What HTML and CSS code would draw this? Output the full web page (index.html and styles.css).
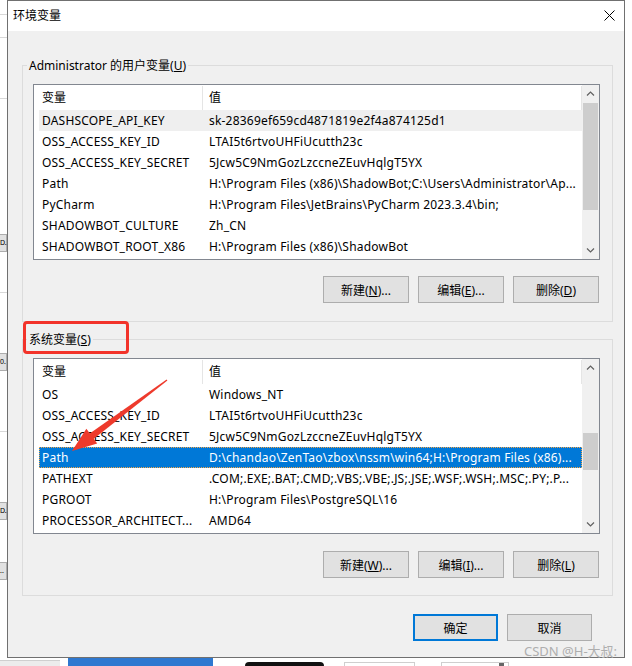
FILE: index.html
```html
<!DOCTYPE html>
<html lang="zh-CN">
<head>
<meta charset="utf-8">
<title>环境变量</title>
<link rel="stylesheet" href="styles.css">
</head>
<body>
<div class="desk">
  <div class="desk-main">
    <div class="desk-left">
      <div class="dl-line l1"></div>
      <div class="dl-line l2"></div>
      <div class="dl-line l3"></div>
      <div class="dl-btn b1">D.</div>
      <div class="dl-line l4"></div>
      <div class="dl-btn b2">0.</div>
      <div class="dl-line l5"></div>
      <div class="dl-btn b3">D.</div>
      <div class="dl-btn b4">..</div>
    </div>
    <div class="desk-right"></div>
  </div>
  <div class="taskbar">
    <div class="tb-gray"></div>
    <div class="tb-blue"></div>
    <div class="tb-black"></div>
    <div class="tb-box"></div>
    <div class="tb-box tb-box2"><span class="tb-dot"></span></div>
  </div>
</div>

<div class="dialog">
  <div class="titlebar">
    <span class="title">环境变量</span>
    <svg class="close" width="11" height="11" viewBox="0 0 11 11"><path d="M0.5 0.5L10.5 10.5M10.5 0.5L0.5 10.5" stroke="#000" stroke-width="1" fill="none"/></svg>
  </div>
  <div class="dlg-body">
    <fieldset class="group">
      <legend>Administrator 的用户变量(<u>U</u>)</legend>
      <div class="gbody">
        <div class="listview">
          <div class="lv-main">
            <div class="lv-head"><div class="c1">变量</div><div class="c2">值</div></div>
            <div class="row hot"><div class="c1">DASHSCOPE_API_KEY</div><div class="c2">sk-28369ef659cd4871819e2f4a874125d1</div></div>
            <div class="row"><div class="c1">OSS_ACCESS_KEY_ID</div><div class="c2">LTAI5t6rtvoUHFiUcutth23c</div></div>
            <div class="row"><div class="c1">OSS_ACCESS_KEY_SECRET</div><div class="c2">5Jcw5C9NmGozLzccneZEuvHqlgT5YX</div></div>
            <div class="row"><div class="c1">Path</div><div class="c2">H:\Program Files (x86)\ShadowBot;C:\Users\Administrator\Ap...</div></div>
            <div class="row"><div class="c1">PyCharm</div><div class="c2">H:\Program Files\JetBrains\PyCharm 2023.3.4\bin;</div></div>
            <div class="row"><div class="c1">SHADOWBOT_CULTURE</div><div class="c2">Zh_CN</div></div>
            <div class="row"><div class="c1">SHADOWBOT_ROOT_X86</div><div class="c2">H:\Program Files (x86)\ShadowBot</div></div>
          </div>
          <div class="scroll">
            <div class="sb-btn"><svg width="9" height="5" viewBox="0 0 9 5"><path d="M1 4.5L4.5 1L8 4.5" stroke="#606060" stroke-width="1.2" fill="none"/></svg></div>
            <div class="sb-track"><div class="thumb thumb-user"></div></div>
            <div class="sb-btn"><svg width="9" height="5" viewBox="0 0 9 5"><path d="M1 0.5L4.5 4L8 0.5" stroke="#606060" stroke-width="1.2" fill="none"/></svg></div>
          </div>
        </div>
        <div class="btnrow">
          <button class="btn">新建(<u>N</u>)...</button>
          <button class="btn">编辑(<u>E</u>)...</button>
          <button class="btn">删除(<u>D</u>)</button>
        </div>
      </div>
    </fieldset>

    <fieldset class="group g2">
      <legend>系统变量(<u>S</u>)</legend>
      <div class="gbody">
        <div class="listview">
          <div class="lv-main">
            <div class="lv-head"><div class="c1">变量</div><div class="c2">值</div></div>
            <div class="row"><div class="c1">OS</div><div class="c2">Windows_NT</div></div>
            <div class="row"><div class="c1">OSS_ACCESS_KEY_ID</div><div class="c2">LTAI5t6rtvoUHFiUcutth23c</div></div>
            <div class="row"><div class="c1">OSS_ACCESS_KEY_SECRET</div><div class="c2">5Jcw5C9NmGozLzccneZEuvHqlgT5YX</div></div>
            <div class="row sel"><div class="c1">Path</div><div class="c2">D:\chandao\ZenTao\zbox\nssm\win64;H:\Program Files (x86)...</div></div>
            <div class="row"><div class="c1">PATHEXT</div><div class="c2">.COM;.EXE;.BAT;.CMD;.VBS;.VBE;.JS;.JSE;.WSF;.WSH;.MSC;.PY;.P...</div></div>
            <div class="row"><div class="c1">PGROOT</div><div class="c2">H:\Program Files\PostgreSQL\16</div></div>
            <div class="row"><div class="c1">PROCESSOR_ARCHITECT...</div><div class="c2">AMD64</div></div>
          </div>
          <div class="scroll">
            <div class="sb-btn"><svg width="9" height="5" viewBox="0 0 9 5"><path d="M1 4.5L4.5 1L8 4.5" stroke="#606060" stroke-width="1.2" fill="none"/></svg></div>
            <div class="sb-track"><div class="thumb thumb-sys"></div></div>
            <div class="sb-btn"><svg width="9" height="5" viewBox="0 0 9 5"><path d="M1 0.5L4.5 4L8 0.5" stroke="#606060" stroke-width="1.2" fill="none"/></svg></div>
          </div>
        </div>
        <div class="btnrow">
          <button class="btn">新建(<u>W</u>)...</button>
          <button class="btn">编辑(<u>I</u>)...</button>
          <button class="btn">删除(<u>L</u>)</button>
        </div>
      </div>
    </fieldset>

    <div class="okrow">
      <button class="btn ok default">确定</button>
      <button class="btn ok">取消</button>
    </div>
  </div>
</div>

<div class="redbox"></div>
<svg class="arrow" width="120" height="90" viewBox="0 0 120 90">
  <polygon points="106.6,9.6 107.4,10.4 33.2,69.3 29.0,63.9" fill="#ee3a2c"/>
  <polygon points="12,81 37.2,73.4 26.4,58.8" fill="#ee3a2c"/>
</svg>
<div class="watermark">CSDN @H-大叔:</div>
</body>
</html>
```

FILE: styles.css
```css
* { box-sizing: border-box; }
html, body { margin: 0; padding: 0; }
body {
  width: 632px;
  height: 666px;
  overflow: hidden;
  position: relative;
  background: #ffffff;
  font-family: "Noto Sans", "Noto Sans CJK SC", sans-serif;
  font-size: 12px;
  color: #000;
}

/* background desktop */
.desk { display: flex; flex-direction: column; height: 666px; }
.desk-main { height: 658px; display: flex; justify-content: space-between; }
.desk-left { width: 7px; display: flex; flex-direction: column; }
.desk-right { width: 7px; }
.dl-line { height: 1px; background: #d8d8d8; }
.l1 { margin-top: 14px; }
.l2 { margin-top: 22px; }
.l3 { margin-top: 60px; }
.l4 { margin-top: 40px; }
.l5 { margin-top: 60px; }
.dl-btn {
  height: 18px;
  background: #e1e1e1;
  border: 1px solid #adadad;
  border-left: none;
  font-size: 7px;
  line-height: 16px;
  white-space: nowrap;
}
.b1 { margin-top: 135px; }
.b2 { margin-top: 60px; }
.b3 { margin-top: 70px; }
.b4 { margin-top: 42px; }
.taskbar { height: 8px; display: flex; align-items: flex-end; }
.tb-gray { width: 60px; height: 6px; background: #ececec; border-top: 1px solid #cfcfcf; }
.tb-blue { width: 145px; height: 8px; background: #2f78d0; margin-left: 8px; }
.tb-black { width: 79px; height: 4px; background: #111; border-radius: 4px 4px 0 0; margin-left: 32px; }
.tb-box { width: 71px; height: 4px; border: 1px solid #cfcfcf; border-bottom: none; margin-left: 20px; }
.tb-box2 { width: 68px; margin-left: 26px; display: flex; justify-content: flex-end; }
.tb-dot { width: 5px; height: 3px; background: #666; margin-right: 4px; }

/* dialog window */
.dialog {
  position: absolute;
  left: 7px;
  top: 0;
  width: 618px;
  height: 658px;
  border: 1px solid #707070;
  background: #f0f0f0;
  display: flex;
  flex-direction: column;
}
.titlebar {
  height: 30px;
  flex: none;
  background: #fff;
  display: flex;
  align-items: center;
  justify-content: space-between;
  padding: 0 9px 2px 5px;
}
.title { line-height: 17px; }
.close { display: block; }

.dlg-body { padding: 26px 11px 0 14px; display: flex; flex-direction: column; }
.group { margin: 0; padding: 0; border: 1px solid #dcdcdc; min-width: 0; }
.group legend { margin-left: 4px; padding: 0 2px; line-height: 17px; }
.gbody { padding: 10px 12px 18px 10px; }
.g2 { margin-top: 9px; }
.g2 .gbody { padding-bottom: 17px; }

.listview {
  height: 176px;
  border: 1px solid #828790;
  background: #fff;
  display: flex;
}
.lv-main { flex: 1; min-width: 0; padding-left: 5px; }
.lv-head { height: 25px; display: flex; padding-top: 1px; }
.lv-head .c1 { width: 164px; border-right: 1px solid #e5e5e5; padding-left: 3px; line-height: 23px; }
.lv-head .c2 { flex: 1; border-right: 1px solid #e5e5e5; padding-left: 6px; line-height: 23px; }
.row { height: 21px; display: flex; line-height: 21px; white-space: nowrap; letter-spacing: 0.2px; }
.row .c1 { width: 164px; flex: none; padding-left: 3px; overflow: hidden; }
.row .c2 { flex: 1; min-width: 0; padding-left: 6px; overflow: hidden; text-overflow: ellipsis; }
.row.hot { background: #efefef; }
.row.sel { background: #0078d7; color: #fff; outline: 1px dotted #f3a64a; outline-offset: -1px; }

.scroll { width: 17px; flex: none; background: #f0f0f0; display: flex; flex-direction: column; }
.sb-btn { height: 17px; flex: none; display: flex; align-items: center; justify-content: center; }
.sb-btn svg { display: block; }
.sb-track { flex: 1; padding: 0 1px; }
.thumb { background: #cdcdcd; }
.thumb-user { margin-top: 1px; height: 107px; }
.thumb-sys { margin-top: 57px; height: 37px; }

.btn {
  width: 86px;
  height: 27px;
  background: #e1e1e1;
  border: 1px solid #adadad;
  font: inherit;
  color: #000;
  padding: 0;
  margin: 0;
}
.btnrow { display: flex; justify-content: flex-end; gap: 9px; margin-top: 16px; padding-right: 1px; }
.g2 .btnrow { margin-top: 17px; }
.okrow { display: flex; justify-content: flex-end; gap: 9px; margin-top: 18px; padding-right: 21px; }
.btn.ok { width: 85px; }
.btn.default { border: 2px solid #0078d7; }

/* overlays */
.redbox {
  position: absolute;
  left: 23px;
  top: 321px;
  width: 106px;
  height: 33px;
  border: 3px solid #f2332a;
  border-radius: 4px;
}
.arrow { position: absolute; left: 60px; top: 370px; }
.watermark {
  position: absolute;
  left: 524px;
  top: 643px;
  font-size: 13px;
  line-height: 16px;
  color: #aeaeae;
  white-space: nowrap;
}
```
